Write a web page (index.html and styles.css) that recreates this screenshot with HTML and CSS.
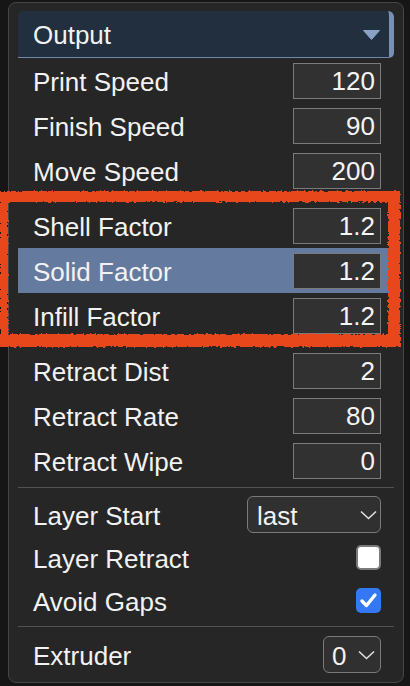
FILE: index.html
```html
<!DOCTYPE html>
<html>
<head>
<meta charset="utf-8">
<link rel="stylesheet" href="styles.css">
</head>
<body>
<svg class="defs" width="0" height="0">
  <filter id="rough" x="-5%" y="-5%" width="110%" height="110%">
    <feTurbulence type="fractalNoise" baseFrequency="0.35" numOctaves="2" seed="3" result="n"/>
    <feDisplacementMap in="SourceGraphic" in2="n" scale="4" xChannelSelector="R" yChannelSelector="G"/>
  </filter>
</svg>
<div class="panel">
  <div class="header">
    <span class="lbl">Output</span>
    <svg class="tri" width="17" height="10" viewBox="0 0 17 10"><polygon points="0.5,0.5 16.5,0.5 8.5,9.5" fill="#8aa2c4" stroke="#8aa2c4" stroke-linejoin="round"/></svg>
  </div>
  <div class="row"><span class="lbl">Print Speed</span><input class="num" value="120"></div>
  <div class="row"><span class="lbl">Finish Speed</span><input class="num" value="90"></div>
  <div class="row"><span class="lbl">Move Speed</span><input class="num" value="200"></div>
  <div class="sep"></div>
  <div class="row"><span class="lbl">Shell Factor</span><input class="num" value="1.2"></div>
  <div class="row sel"><span class="lbl">Solid Factor</span><input class="num" value="1.2"></div>
  <div class="row"><span class="lbl">Infill Factor</span><input class="num" value="1.2"></div>
  <div class="sep"></div>
  <div class="row"><span class="lbl">Retract Dist</span><input class="num" value="2"></div>
  <div class="row"><span class="lbl">Retract Rate</span><input class="num" value="80"></div>
  <div class="row"><span class="lbl">Retract Wipe</span><input class="num" value="0"></div>
  <div class="sep"></div>
  <div class="row short"><span class="lbl">Layer Start</span>
    <div class="select wide"><span class="lbl">last</span><svg width="17" height="10" viewBox="0 0 17 10"><polyline points="1,1.5 8.5,8.5 16,1.5" fill="none" stroke="#e0e0e0" stroke-width="1.6"/></svg></div>
  </div>
  <div class="row short"><span class="lbl">Layer Retract</span><span class="check"></span></div>
  <div class="row short"><span class="lbl">Avoid Gaps</span><span class="check on"><svg width="25" height="25" viewBox="0 0 25 25"><polyline points="6,13 10.5,17.5 19,7" fill="none" stroke="#fff" stroke-width="3.4" stroke-linecap="round" stroke-linejoin="round"/></svg></span></div>
  <div class="sep"></div>
  <div class="row"><span class="lbl">Extruder</span>
    <div class="select narrow"><span class="lbl">0</span><svg width="17" height="10" viewBox="0 0 17 10"><polyline points="1,1.5 8.5,8.5 16,1.5" fill="none" stroke="#e0e0e0" stroke-width="1.6"/></svg></div>
  </div>
</div>
<div class="mark"></div>
</body>
</html>
```
FILE: styles.css
```css
html, body {
  margin: 0;
  padding: 0;
}
body {
  background: #161616;
  width: 410px;
  height: 686px;
  overflow: hidden;
  position: relative;
  font-family: "Liberation Sans", Arial, sans-serif;
  color: #f2f2f2;
}
.defs {
  position: absolute;
  width: 0;
  height: 0;
}
.panel {
  box-sizing: border-box;
  width: 396px;
  margin: 2px 0 0 8px;
  border: 1px solid #464646;
  border-radius: 8px;
  background: #262626;
  padding: 8px 9px 5px 9px;
}
.lbl {
  padding-top: 3px;
}
.header {
  box-sizing: border-box;
  height: 47px;
  display: flex;
  align-items: center;
  justify-content: space-between;
  background: #222f3e;
  border-bottom: 1px solid #7088aa;
  border-right: 5px solid #7890b2;
  border-radius: 5px 6px 5px 0;
  padding: 0 9px 0 15px;
  font-size: 26px;
}
.tri {
  display: block;
  margin-top: 2px;
}
.row {
  box-sizing: border-box;
  height: 45px;
  display: flex;
  align-items: center;
  justify-content: space-between;
  padding: 0 13px 0 15px;
  font-size: 26px;
}
.row.short {
  height: 43px;
}
.row.sel {
  background: #647b9f;
}
.num {
  box-sizing: border-box;
  width: 88px;
  height: 36px;
  border: 1px solid #7b7b7b;
  background: #313131;
  color: #f4f4f4;
  font-family: "Liberation Sans", Arial, sans-serif;
  font-size: 26px;
  text-align: right;
  padding: 2px 5px 0 0;
  margin: 0;
  outline: none;
}
.sep {
  height: 1px;
  background: #525252;
  margin: 4px 0 5px 0;
}
.select {
  box-sizing: border-box;
  height: 37px;
  display: flex;
  align-items: center;
  justify-content: space-between;
  border: 1.5px solid #7a7a7a;
  border-radius: 6px;
  background: #303030;
  font-size: 26px;
}
.select.wide {
  width: 134px;
  padding: 0 3px 0 9px;
}
.select.narrow {
  width: 58px;
  padding: 0 5px 0 8px;
}
.select svg {
  display: block;
}
.check {
  box-sizing: border-box;
  width: 25px;
  height: 25px;
  border-radius: 5px;
  background: #fff;
  border: 2px solid #7a7a7a;
  display: block;
}
.check.on {
  background: #3478f6;
  border: none;
}
.check svg {
  display: block;
}
.mark {
  position: absolute;
  left: 0;
  top: 191px;
  width: 400px;
  height: 156px;
  box-sizing: border-box;
  border-style: solid;
  border-color: #e8461f;
  border-width: 11px 12px 13px 8px;
  filter: url(#rough);
}
```
